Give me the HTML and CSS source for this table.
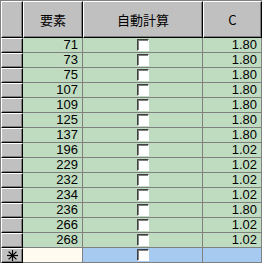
FILE: index.html
```html
<!DOCTYPE html>
<html>
<head>
<meta charset="utf-8">
<link rel="stylesheet" href="styles.css">
</head>
<body>
<div class="grid">
  <div class="hdr sel"></div>
  <div class="hdr">要素</div>
  <div class="hdr">自動計算</div>
  <div class="hdr">C</div>

  <div class="sel"></div><div class="cell num">71</div><div class="cell chk"><span class="box"></span></div><div class="cell num">1.80</div>
  <div class="sel"></div><div class="cell num">73</div><div class="cell chk"><span class="box"></span></div><div class="cell num">1.80</div>
  <div class="sel"></div><div class="cell num">75</div><div class="cell chk"><span class="box"></span></div><div class="cell num">1.80</div>
  <div class="sel"></div><div class="cell num">107</div><div class="cell chk"><span class="box"></span></div><div class="cell num">1.80</div>
  <div class="sel"></div><div class="cell num">109</div><div class="cell chk"><span class="box"></span></div><div class="cell num">1.80</div>
  <div class="sel"></div><div class="cell num">125</div><div class="cell chk"><span class="box"></span></div><div class="cell num">1.80</div>
  <div class="sel"></div><div class="cell num">137</div><div class="cell chk"><span class="box"></span></div><div class="cell num">1.80</div>
  <div class="sel"></div><div class="cell num">196</div><div class="cell chk"><span class="box"></span></div><div class="cell num">1.02</div>
  <div class="sel"></div><div class="cell num">229</div><div class="cell chk"><span class="box"></span></div><div class="cell num">1.02</div>
  <div class="sel"></div><div class="cell num">232</div><div class="cell chk"><span class="box"></span></div><div class="cell num">1.02</div>
  <div class="sel"></div><div class="cell num">234</div><div class="cell chk"><span class="box"></span></div><div class="cell num">1.02</div>
  <div class="sel"></div><div class="cell num">236</div><div class="cell chk"><span class="box"></span></div><div class="cell num">1.80</div>
  <div class="sel"></div><div class="cell num">266</div><div class="cell chk"><span class="box"></span></div><div class="cell num">1.02</div>
  <div class="sel"></div><div class="cell num">268</div><div class="cell chk"><span class="box"></span></div><div class="cell num">1.02</div>

  <div class="sel star"><svg width="11" height="11" viewBox="0 0 11 11"><g stroke="#000" stroke-width="1.2" stroke-linecap="square"><line x1="5.5" y1="0.5" x2="5.5" y2="10.5"/><line x1="0.5" y1="5.5" x2="10.5" y2="5.5"/><line x1="2" y1="2" x2="9" y2="9"/><line x1="9" y1="2" x2="2" y2="9"/></g></svg></div><div class="cell new1"></div><div class="cell chk new2"><span class="box"></span></div><div class="cell new2"></div>
</div>
</body>
</html>
```

FILE: styles.css
```css
html, body {
  margin: 0;
  padding: 0;
  background: #ffffff;
}
body {
  width: 266px;
  height: 265px;
  overflow: hidden;
  font-family: "Liberation Sans", Arial, "Noto Sans CJK JP", sans-serif;
  font-size: 13px;
  color: #000;
}
.grid {
  display: grid;
  grid-template-columns: 22px 60px 120px 59px;
  grid-template-rows: 37px repeat(15, 15px);
  width: 261px;
  border-left: 1px solid #808080;
  border-top: 1px solid #808080;
  box-sizing: content-box;
  background: #c0c0c0;
}
.hdr {
  background: #c0c0c0;
  border-top: 1px solid #ffffff;
  border-left: 1px solid #ffffff;
  border-right: 1px solid #000000;
  border-bottom: 1px solid #000000;
  box-shadow: inset -1px -1px 0 #808080;
  display: flex;
  align-items: center;
  justify-content: center;
  font-family: "Noto Sans CJK JP", "Liberation Sans", sans-serif;
  font-size: 13px;
  box-sizing: border-box;
}
.sel {
  background: #c0c0c0;
  border-top: 1px solid #ffffff;
  border-left: 1px solid #ffffff;
  border-right: 1px solid #000000;
  border-bottom: 1px solid #000000;
  box-shadow: inset -1px -1px 0 #808080;
  box-sizing: border-box;
}
.star {
  display: flex;
  align-items: center;
  justify-content: center;
}
.cell {
  background: #c0dcc0;
  border-right: 1px solid #808080;
  border-bottom: 1px solid #808080;
  box-sizing: border-box;
  line-height: 14px;
  height: 15px;
}
.num {
  text-align: right;
  padding-right: 4px;
}
.chk {
  display: flex;
  align-items: center;
  justify-content: center;
}
.box {
  width: 12px;
  height: 12px;
  box-sizing: border-box;
  background: #fff;
  border-top: 1px solid #404040;
  border-left: 1px solid #404040;
  border-right: 1px solid #ffffff;
  border-bottom: 1px solid #ffffff;
  box-shadow: inset 1px 1px 0 #808080;
}
.new1 {
  background: #fffbf0;
}
.new2 {
  background: #a6caf0;
}
```
